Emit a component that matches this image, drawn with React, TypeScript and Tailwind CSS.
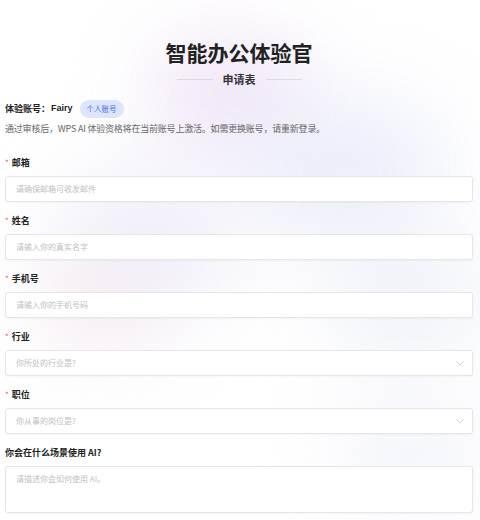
import React from 'react';

const font = { fontFamily: '"Noto Sans CJK SC", "Noto Sans", sans-serif' };

export default function App() {
  return (
    <div className="relative w-[480px] h-[520px] overflow-hidden bg-white" style={font}>
      {/* soft background glow */}
      <div className="absolute left-[150px] top-[40px] w-[160px] h-[110px] rounded-full bg-[#efe2f5] blur-[40px] opacity-90" />
      <div className="absolute left-[240px] top-[110px] w-[200px] h-[120px] rounded-full bg-[#e6e9f8] blur-[45px] opacity-90" />
      <div className="absolute left-[60px] top-[170px] w-[180px] h-[140px] rounded-full bg-[#ebeaf8] blur-[45px] opacity-80" />
      <div className="absolute left-[40px] top-[260px] w-[120px] h-[90px] rounded-full bg-[#f6e6ee] blur-[40px] opacity-80" />
      <div className="absolute left-[330px] top-[240px] w-[150px] h-[120px] rounded-full bg-[#e9ecf6] blur-[45px] opacity-80" />
      <div className="absolute left-[340px] top-[410px] w-[140px] h-[90px] rounded-full bg-[#eceef8] blur-[40px] opacity-70" />

      <div className="relative flex flex-col px-[5px] pt-[38px] w-[478px]">
        <h1 className="text-center text-[21px] leading-[28px] font-bold text-[#222]">智能办公体验官</h1>
        <div className="mt-[5px] flex items-center justify-center gap-[10px]">
          <div className="w-[36px] h-px bg-[#dcdcdc]" />
          <span className="text-[11px] leading-[16px] font-bold text-[#333]">申请表</span>
          <div className="w-[36px] h-px bg-[#dcdcdc]" />
        </div>

        <div className="mt-[13px] flex items-center h-[18px]">
          <span className="text-[9px] font-bold text-[#222]">体验账号：</span>
          <span className="ml-[1px] text-[9px] font-bold text-[#222]" style={{ fontFamily: '"Liberation Sans", sans-serif' }}>Fairy</span>
          <span className="ml-[7px] h-[18px] px-[7px] rounded-full bg-[#dce5fc] text-[#3f6ade] text-[7.5px] leading-[18px]">个人账号</span>
        </div>
        <p className="mt-[4px] text-[9px] tracking-[-0.2px] leading-[14px] text-[#666]">通过审核后，WPS AI 体验资格将在当前账号上激活。如需更换账号，请重新登录。</p>

        <div className="mt-[20px] flex flex-col gap-[12px]">
          <Field label="邮箱" required placeholder="请确保邮箱可收发邮件" />
          <Field label="姓名" required placeholder="请输入你的真实名字" />
          <Field label="手机号" required placeholder="请输入你的手机号码" />
          <Field label="行业" required placeholder="你所处的行业是?" select />
          <Field label="职位" required placeholder="你从事的岗位是?" select />
          <div className="flex flex-col">
            <label className="h-[14px] text-[9px] leading-[14px] font-bold text-[#222]">你会在什么场景使用 AI?</label>
            <div className="mt-[6px] h-[47px] rounded-[3px] border border-[#e6e6e6] bg-white shadow-[0_1px_2px_rgba(0,0,0,0.04)] px-[10px] pt-[6px]">
              <p className="text-[8px] leading-[12px] text-[#c0c0c0]">请描述你会如何使用 AI。</p>
            </div>
          </div>
        </div>
      </div>
    </div>
  );
}

function Field({ label, placeholder, required, select }: { label: string; placeholder: string; required?: boolean; select?: boolean }) {
  return (
    <div className="flex flex-col">
      <label className="h-[14px] flex items-center text-[9px] leading-[14px] font-bold text-[#222]">
        {required && <span className="text-[#f0506e] text-[8px] font-normal mr-[3px]">*</span>}
        {label}
      </label>
      <div className="mt-[6px] h-[26px] rounded-[3px] border border-[#e6e6e6] bg-white shadow-[0_1px_2px_rgba(0,0,0,0.04)] px-[10px] flex items-center justify-between">
        <span className="text-[8px] text-[#c0c0c0]">{placeholder}</span>
        {select && (
          <svg width="8" height="5" viewBox="0 0 8 5" fill="none" className="mr-[-2px]">
            <path d="M0.5 0.5 L4 4 L7.5 0.5" stroke="#c8c8c8" strokeWidth="0.8" />
          </svg>
        )}
      </div>
    </div>
  );
}
